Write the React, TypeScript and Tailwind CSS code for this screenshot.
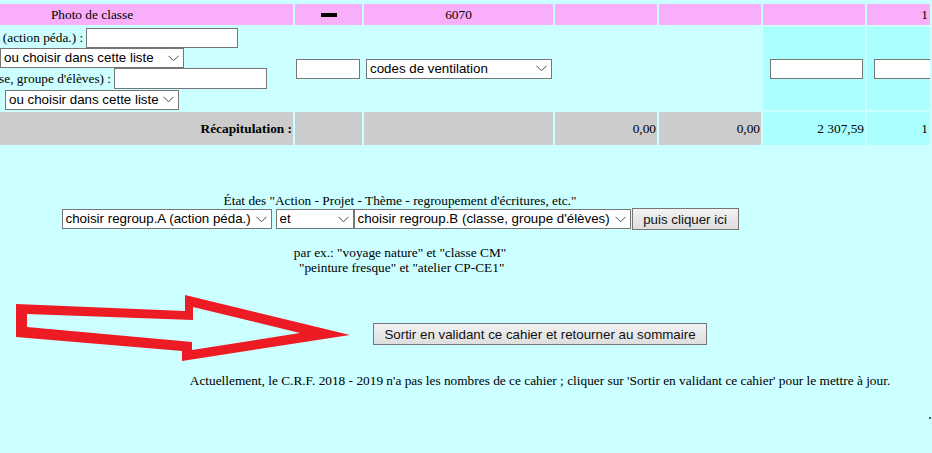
import React from "react";

function Chevron() {
  return (
    <svg width="11" height="7" viewBox="0 0 11 7" className="shrink-0 mr-[4px]">
      <path d="M0.5 0.8 L5.5 5.8 L10.5 0.8" fill="none" stroke="#4a4a4a" strokeWidth="1" />
    </svg>
  );
}

function Sel({ className, text }: { className: string; text: string }) {
  return (
    <div
      className={
        "flex items-center h-[20px] border border-[#767676] bg-white text-[13.33px] leading-[16px] text-black font-['Liberation_Sans',Arial,sans-serif] " +
        className
      }
    >
      <select className="appearance-none flex-1 min-w-0 h-full bg-transparent outline-none pl-[3px] pr-0 text-left">
        <option>{text}</option>
      </select>
      <Chevron />
    </div>
  );
}

function Inp({ className }: { className: string }) {
  return <input type="text" className={"h-[20px] border border-[#767676] bg-white " + className} />;
}

export default function App() {
  return (
    <div className="relative w-[932px] h-[453px] overflow-hidden bg-[#ccffff] text-[13.33px] leading-[15px] text-black font-['Liberation_Serif','Times_New_Roman',serif]">
      {/* main table */}
      <div className="pt-[4px] -ml-[109px] grid grid-cols-[402px_67px_189px_102px_102px_102px_63px] grid-rows-[21px_83px_33px] gap-[2px] w-max">
        {/* row 1 */}
        <div className="bg-[#f9aef9] flex items-center justify-center">Photo de classe</div>
        <div className="bg-[#f9aef9] flex items-center justify-center">
          <div className="w-[16px] h-[4px] bg-black" />
        </div>
        <div className="bg-[#f9aef9] flex items-center justify-center">6070</div>
        <div className="bg-[#f9aef9]" />
        <div className="bg-[#f9aef9]" />
        <div className="bg-[#f9aef9]" />
        <div className="bg-[#f9aef9] flex items-center justify-end pr-[2px]">1</div>

        {/* row 2 */}
        <div className="bg-[#ccffff] flex flex-col">
          <div className="h-[21px] flex items-end justify-center gap-[3px] whitespace-nowrap">
            <span className="mb-[3px]">regroup.A (action péda.) :</span>
            <Inp className="w-[152px]" />
          </div>
          <div className="h-[20px] flex items-center justify-center">
            <Sel className="w-[184px]" text="ou choisir dans cette liste" />
          </div>
          <div className="h-[21px] flex items-center justify-center gap-[3px] whitespace-nowrap">
            <span>regroup.B (classe, groupe d'élèves) :</span>
            <Inp className="w-[153px] h-[21px]" />
          </div>
          <div className="h-[21px] flex items-center justify-center">
            <Sel className="w-[174px]" text="ou choisir dans cette liste" />
          </div>
        </div>
        <div className="bg-[#ccffff] flex items-center">
          <Inp className="w-[64px] ml-[1px]" />
        </div>
        <div className="bg-[#ccffff] flex items-center">
          <Sel className="w-[186px] ml-[2px]" text="codes de ventilation" />
        </div>
        <div className="bg-[#ccffff]" />
        <div className="bg-[#ccffff]" />
        <div className="bg-[#aaffff] flex items-center">
          <Inp className="w-[93px] ml-[7px]" />
        </div>
        <div className="bg-[#aaffff] flex items-center overflow-hidden">
          <Inp className="w-[93px] ml-[7px] shrink-0" />
        </div>

        {/* row 3 */}
        <div className="bg-[#cccccc] flex items-center justify-end pr-[1px] font-bold">Récapitulation :</div>
        <div className="bg-[#cccccc]" />
        <div className="bg-[#cccccc]" />
        <div className="bg-[#cccccc] flex items-center justify-end pr-[1px]">0,00</div>
        <div className="bg-[#cccccc] flex items-center justify-end pr-[1px]">0,00</div>
        <div className="bg-[#aaffff] flex items-center justify-end pr-[1px]">2 307,59</div>
        <div className="bg-[#aaffff] flex items-center justify-end pr-[2px]">1</div>
      </div>

      {/* état block */}
      <div className="mt-[48px] w-[800px] text-center">
        <div>État des "Action - Projet - Thème - regroupement d'écritures, etc."</div>
        <div className="h-[22px] flex items-center justify-center">
          <Sel className="w-[210px]" text="choisir regroup.A (action péda.)" />
          <Sel className="w-[78px] ml-[4px]" text="et" />
          <Sel className="w-[277px]" text="choisir regroup.B (classe, groupe d'élèves)" />
          <button className="ml-[1px] w-[107px] h-[22px] border border-[#767676] bg-linear-to-b from-[#f2f2f2] to-[#dedede] text-[13.33px] text-[#111] font-['Liberation_Sans',Arial,sans-serif]">
            puis cliquer ici
          </button>
        </div>
        <div className="h-[15px]" />
        <div>par ex.: "voyage nature" et "classe CM"</div>
        <div>&nbsp;"peinture fresque" et "atelier CP-CE1"</div>
      </div>

      {/* exit block */}
      <div className="mt-[48px] w-[1080px] flex flex-col items-center">
        <button className="w-[334px] h-[22px] border border-[#767676] bg-linear-to-b from-[#f2f2f2] to-[#dedede] text-[13.33px] text-[#111] font-['Liberation_Sans',Arial,sans-serif]">
          Sortir en validant ce cahier et retourner au sommaire
        </button>
        <div className="mt-[28px] whitespace-nowrap">
          Actuellement, le C.R.F. 2018 - 2019 n'a pas les nombres de ce cahier ; cliquer sur 'Sortir en validant ce cahier' pour le mettre à jour.
        </div>
      </div>

      {/* stray mark at right edge */}
      <span className="absolute left-[929px] top-[417px] w-[2px] h-[2px] bg-[#555]" />

      {/* red arrow drawing */}
      <svg className="absolute left-0 top-[290px]" width="360" height="80" viewBox="0 290 360 80">
        <path
          fillRule="evenodd"
          fill="#ed1c24"
          d="M16 304 L185 311 L185 295 L350 335 L182 361 L182 351 L16 337 Z M27 314 L193 320 L193 307 L300 333 L192 350 L192 342 L27 327 Z"
        />
      </svg>
    </div>
  );
}
